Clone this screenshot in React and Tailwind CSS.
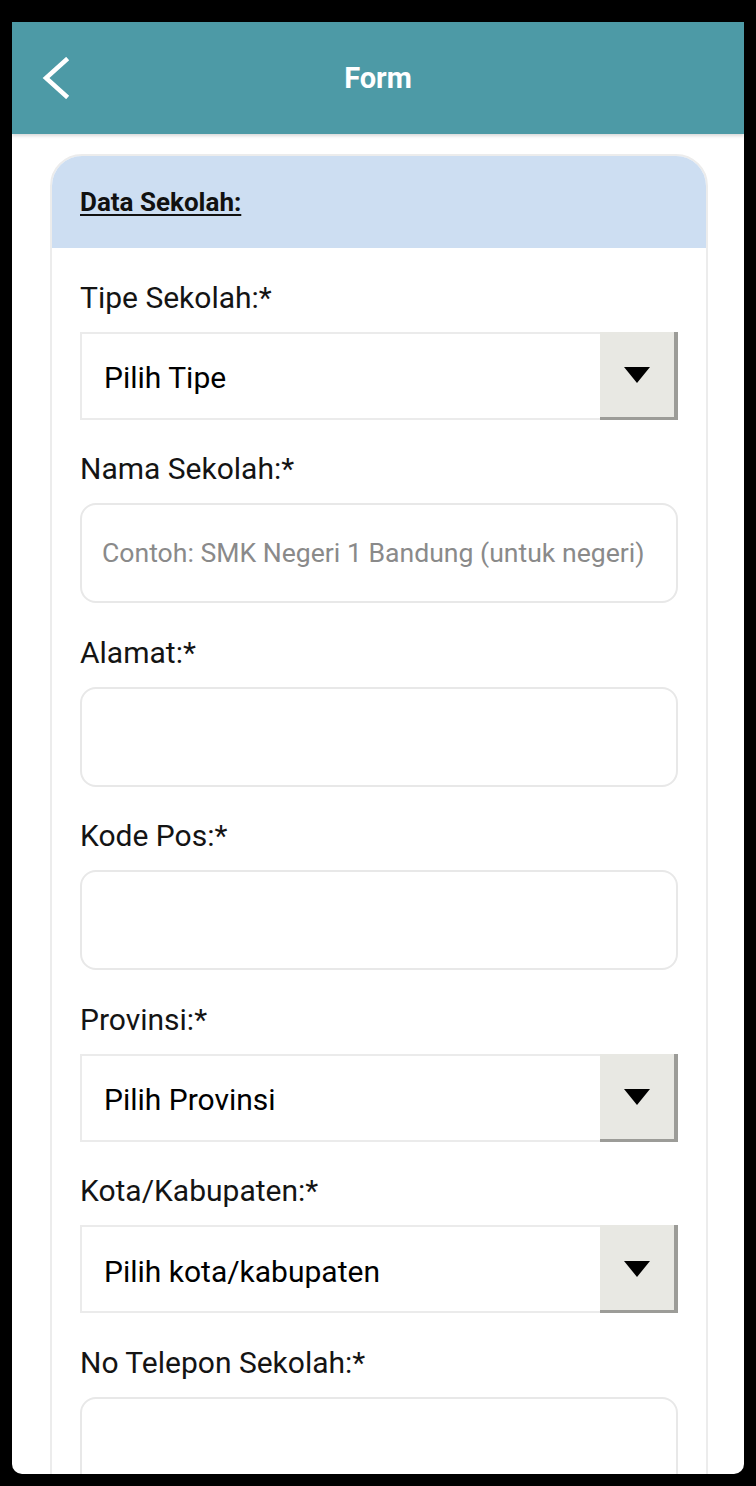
const FIELDS = [
  { label: 'Tipe Sekolah:*', type: 'select', value: 'Pilih Tipe' },
  { label: 'Nama Sekolah:*', type: 'input', placeholder: 'Contoh: SMK Negeri 1 Bandung (untuk negeri)' },
  { label: 'Alamat:*', type: 'input' },
  { label: 'Kode Pos:*', type: 'input' },
  { label: 'Provinsi:*', type: 'select', value: 'Pilih Provinsi' },
  { label: 'Kota/Kabupaten:*', type: 'select', value: 'Pilih kota/kabupaten' },
  { label: 'No Telepon Sekolah:*', type: 'input' },
]

export default function App() {
  return (
    <div className="w-[756px] h-[1486px] bg-black pt-[22px] px-[12px] pb-[12px] font-[Roboto,sans-serif]">
      <div className="h-full bg-white rounded-b-[10px] overflow-hidden flex flex-col">
        <header className="h-[112px] shrink-0 bg-[#4d9aa6] grid grid-cols-[90px_1fr_90px] items-center shadow-[0_2px_3px_rgba(0,0,0,0.15)]">
          <div className="pl-[30px] flex items-center">
            <svg width="28" height="42" viewBox="0 0 28 42" fill="none">
              <path d="M24 3 L4 21 L24 39" stroke="white" strokeWidth="4.5" strokeLinecap="square" strokeLinejoin="miter" />
            </svg>
          </div>
          <h1 className="text-center text-white text-[29px] font-bold pt-[2px]">Form</h1>
          <div />
        </header>

        <div className="pt-[20px]">
          <div className="ml-[38px] w-[658px] border-2 border-[#ececec] rounded-t-[32px] overflow-hidden">
            <div className="h-[92px] bg-[#cddef2] flex items-center px-[28px]">
              <span className="text-[26px] font-bold underline underline-offset-[3px] decoration-2 text-[#111]">Data Sekolah:</span>
            </div>
            <div className="px-[28px] pb-[40px]">
              {FIELDS.map((f) => (
                <Field key={f.label} {...f} />
              ))}
            </div>
          </div>
        </div>
      </div>
    </div>
  )
}

function Field({ label, type, value, placeholder }) {
  return (
    <div className="pt-[32.5px]">
      <p className="h-[34px] leading-[34px] text-[30px] text-[#141414] mb-[17px]">{label}</p>
      {type === 'select' ? (
        <div className="flex h-[88px]">
          <div className="flex-1 border-2 border-r-0 border-[#ebebeb] flex items-center pl-[22px] pt-[4px] text-[30px] text-black">
            {value}
          </div>
          <div className="w-[78px] bg-[#e8e8e3] border-r-4 border-b-[3px] border-[#9c9c98] flex items-center justify-center pt-[2px]">
            <svg width="26" height="16" viewBox="0 0 26 16">
              <path d="M0 0 H26 L13 16 Z" fill="black" />
            </svg>
          </div>
        </div>
      ) : (
        <div className="h-[100px] rounded-[16px] border-2 border-[#e8e8e8] flex items-center px-[20px] text-[26.6px] text-[#8a8a8a]">
          {placeholder}
        </div>
      )}
    </div>
  )
}
